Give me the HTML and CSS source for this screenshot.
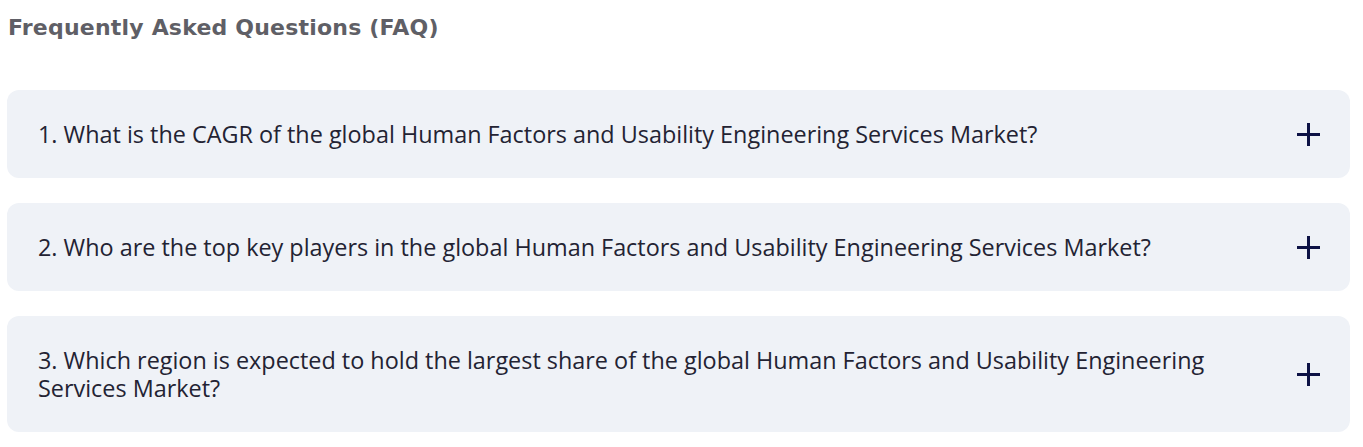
FILE: index.html
```html
<!DOCTYPE html>
<html>
<head>
    <link rel="stylesheet" href="styles.css">
</head>
<body>
    <div class="faq">
        <h2 class="faq-title">Frequently Asked Questions (FAQ)</h2>
        <div class="faq-list">
            <div class="faq-item">
                <div class="faq-question">1. What is the CAGR of the global Human Factors and Usability Engineering Services Market?</div>
                <span class="faq-plus"></span>
            </div>
            <div class="faq-item">
                <div class="faq-question">2. Who are the top key players in the global Human Factors and Usability Engineering Services Market?</div>
                <span class="faq-plus"></span>
            </div>
            <div class="faq-item">
                <div class="faq-question">3. Which region is expected to hold the largest share of the global Human Factors and Usability Engineering Services Market?</div>
                <span class="faq-plus"></span>
            </div>
        </div>
    </div>
</body>
</html>
```

FILE: styles.css
```css
body {
    margin: 0;
    padding: 0;
    background-color: #ffffff;
}

.faq {
    padding: 12px 13px 0 7px;
}

.faq-title {
    margin: 0 0 0 1px;
    font-family: "DejaVu Sans", sans-serif;
    font-weight: bold;
    font-size: 22px;
    letter-spacing: 0.2px;
    line-height: 31px;
    color: #5f5f66;
}

.faq-list {
    display: flex;
    flex-direction: column;
    gap: 25px;
    margin-top: 47px;
}

.faq-item {
    display: flex;
    align-items: center;
    justify-content: space-between;
    padding: 30px 30px 30px 31px;
    background-color: #eff2f7;
    border-radius: 12px;
}

.faq-question {
    max-width: 1200px;
    font-family: "Open Sans", sans-serif;
    font-size: 23.4px;
    line-height: 28px;
    color: #232333;
}

.faq-plus {
    position: relative;
    width: 23px;
    height: 23px;
    flex-shrink: 0;
}

.faq-plus::before,
.faq-plus::after {
    content: "";
    position: absolute;
    background-color: #0d1245;
}

.faq-plus::before {
    left: 0;
    top: 10px;
    width: 23px;
    height: 3px;
}

.faq-plus::after {
    left: 10px;
    top: 0;
    width: 3px;
    height: 23px;
}
```
